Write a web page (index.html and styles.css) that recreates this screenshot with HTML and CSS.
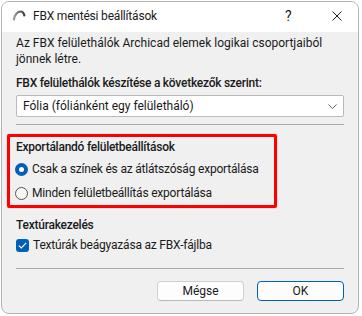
FILE: index.html
```html
<!DOCTYPE html>
<html lang="hu">
<head>
    <meta charset="UTF-8">
    <title>FBX mentési beállítások</title>
    <link rel="stylesheet" href="styles.css">
</head>
<body>

<div class="window">
    <!-- Title bar -->
    <div class="titlebar">
        <svg class="app-icon" width="14" height="12" viewBox="0 0 14 12">
            <defs>
                <linearGradient id="arc" x1="0" y1="0" x2="1" y2="0">
                    <stop offset="0" stop-color="#9a9a9a"/>
                    <stop offset="1" stop-color="#3c3c3c"/>
                </linearGradient>
            </defs>
            <path d="M2 10.5 C2.5 5 6 2.5 8.5 2.5 C10.5 2.5 11.8 4 12.3 6.5" fill="none" stroke="url(#arc)" stroke-width="2.2" stroke-linecap="round"/>
        </svg>
        <span class="title">FBX mentési beállítások</span>
        <span class="help">?</span>
        <svg class="close" width="10" height="10" viewBox="0 0 10 10">
            <path d="M0.5 0.5 L9.5 9.5 M9.5 0.5 L0.5 9.5" stroke="#1a1a1a" stroke-width="1"/>
        </svg>
    </div>

    <div class="content">
        <p class="intro">Az FBX felülethálók Archicad elemek logikai csoportjaiból jönnek létre.</p>

        <div class="label">FBX felülethálók készítése a következők szerint:</div>
        <div class="select">
            <span>Fólia (fóliánként egy felületháló)</span>
            <svg width="9" height="5" viewBox="0 0 9 5"><path d="M0.5 0.5 L4.5 4.5 L8.5 0.5" fill="none" stroke="#606060" stroke-width="1"/></svg>
        </div>
        <div class="separator"></div>

        <!-- highlighted group -->
        <div class="highlight">
            <div class="label">Exportálandó felületbeállítások</div>
            <div class="option"><span class="radio checked"></span>Csak a színek és az átlátszóság exportálása</div>
            <div class="option"><span class="radio"></span>Minden felületbeállítás exportálása</div>
        </div>

        <div class="label texture-label">Textúrakezelés</div>
        <div class="option">
            <span class="checkbox">
                <svg width="9" height="7" viewBox="0 0 9 7"><path d="M0.8 3.6 L3.3 6 L8.2 0.9" fill="none" stroke="#fff" stroke-width="1.1"/></svg>
            </span>Textúrák beágyazása az FBX-fájlba
        </div>

        <div class="separator bottom-sep"></div>

        <div class="buttons">
            <button class="btn">Mégse</button>
            <button class="btn primary">OK</button>
        </div>
    </div>
</div>

</body>
</html>
```
FILE: styles.css
```css
body { margin: 0; background: #ffffff; font-family: Roboto, "Noto Sans", sans-serif; font-size: 12px; color: #1a1a1a; }
.window { margin: 1px 0 0 1px; width: 358px; height: 313px; box-sizing: border-box; border: 1px solid #b4b4b4; border-radius: 8px; overflow: hidden; background: #f0f0f0; }
.titlebar { height: 30px; background: #ffffff; display: flex; align-items: center; padding: 0 0 3px 10px; box-sizing: border-box; }
.app-icon { margin-right: 7px; margin-top: -2px; }
.title { flex: 1; letter-spacing: -0.2px; }
.help { font-size: 14px; width: 10px; margin-right: 37px; }
.close { margin-right: 16px; }
.content { padding: 3px 14px 0 14px; }
.intro { margin: 0; line-height: 16px; }
.label { font-weight: 500; line-height: 16px; margin-top: 8px; letter-spacing: -0.25px; }
.select { margin-top: 4px; height: 22px; box-sizing: border-box; background: #fff; border: 1px solid #b9b9b9; border-radius: 2px; display: flex; align-items: center; justify-content: space-between; padding: 0 6px 0 6px; }
.separator { height: 1px; background: #a8a8a8; margin-top: 7px; }
.highlight { margin: 9px 0 0 -9px; width: 270px; box-sizing: border-box; border: 3px solid #ff0000; border-radius: 2px; box-shadow: 0 0 1px #ff6060; padding: 2px 0 0 6px; }
.highlight .label { margin-top: 0; margin-bottom: 2px; }
.option { height: 24px; display: flex; align-items: center; letter-spacing: -0.2px; }
.radio { width: 13px; height: 13px; box-sizing: border-box; border-radius: 50%; border: 1px solid #555; background: #f6f6f6; margin: 0 4px 0 -1px; }
.radio.checked { border: 4px solid #005fb8; background: #fff; }
.texture-label { margin-top: 9px; }
.checkbox { width: 13px; height: 13px; border-radius: 3px; background: #005fb8; margin-right: 4px; display: flex; align-items: center; justify-content: center; }
.bottom-sep { margin-top: 11px; }
.buttons { display: flex; justify-content: flex-end; gap: 13px; margin-top: 12px; }
.btn { width: 87px; height: 20px; font-family: inherit; font-size: 12px; color: #1a1a1a; background: #fdfdfd; border: 1px solid #d0d0d0; border-bottom-color: #b8b8b8; border-radius: 4px; padding: 0; }
.btn.primary { border: 1px solid #005fb8; }
```
